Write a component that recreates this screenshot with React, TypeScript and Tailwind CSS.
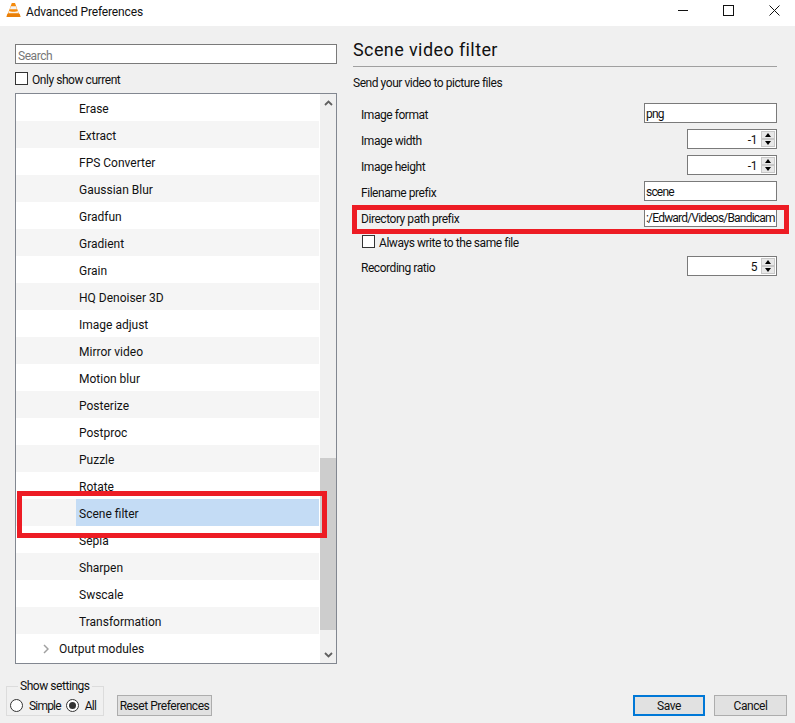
const treeItems = [
  "Erase", "Extract", "FPS Converter", "Gaussian Blur", "Gradfun", "Gradient", "Grain",
  "HQ Denoiser 3D", "Image adjust", "Mirror video", "Motion blur", "Posterize", "Postproc",
  "Puzzle", "Rotate", "Scene filter", "Sepia", "Sharpen", "Swscale", "Transformation",
]

function VlcIcon() {
  return (
    <svg width="15" height="16" viewBox="0 0 16 17">
      <path d="M6.2 1h3.4l4.4 12H1.8z" fill="#f58a0b" />
      <path d="M5.2 4.6h5.4l1 3H4.2z" fill="#f4f4f4" />
      <path d="M3.4 9.6c1.2 1 8 1 9.2 0l.8 2.4H2.6z" fill="#f9f2e8" />
      <path d="M1.4 12.6h13.2l1 3.4H.4z" fill="#e97f08" />
    </svg>
  )
}

function Chevron({ up }: { up?: boolean }) {
  return (
    <svg width="9" height="6" viewBox="0 0 9 6">
      <path d={up ? "M1 5l3.5-3.5L8 5" : "M1 1l3.5 3.5L8 1"} fill="none" stroke="#606060" strokeWidth="1.8" />
    </svg>
  )
}

function Check({ label }: { label: string }) {
  return (
    <div className="flex items-center gap-[4px]">
      <span className="w-[13px] h-[13px] bg-white border border-[#333]" />
      <span className="pt-[2px]">{label}</span>
    </div>
  )
}

function TextRow({ label, value }: { label: string; value: string }) {
  return (
    <div className="flex items-center justify-between h-[20px]">
      <span className="pt-[3px]">{label}</span>
      <input
        readOnly
        value={value}
        className="w-[133px] h-[20px] bg-white border border-[#7a7a7a] pl-[1px] pt-[2px] outline-none tracking-[-0.8px]"
      />
    </div>
  )
}

function SpinRow({ label, value }: { label: string; value: string }) {
  return (
    <div className="flex items-center justify-between h-[20px]">
      <span className="pt-[3px]">{label}</span>
      <div className="w-[90px] h-[20px] bg-white border border-[#7a7a7a] flex items-center justify-end pr-[1px]">
        <span className="mr-[4px] pt-[2px]">{value}</span>
        <div className="w-[14px] h-[16px] flex flex-col">
          <div className="h-[8px] bg-[#e8e8e8] border border-[#c8c8c8] flex items-center justify-center">
            <span className="w-0 h-0 border-x-[3px] border-x-transparent border-b-[4px] border-b-black" />
          </div>
          <div className="h-[8px] bg-[#e8e8e8] border border-[#c8c8c8] flex items-center justify-center">
            <span className="w-0 h-0 border-x-[3px] border-x-transparent border-t-[4px] border-t-black" />
          </div>
        </div>
      </div>
    </div>
  )
}

function Radio({ label, checked }: { label: string; checked?: boolean }) {
  return (
    <div className="flex items-center gap-[6px]">
      <span className="w-[13px] h-[13px] rounded-full bg-white border border-[#333] flex items-center justify-center">
        {checked && <span className="w-[7px] h-[7px] rounded-full bg-[#333]" />}
      </span>
      <span className="pt-[1px] tracking-[-0.8px]">{label}</span>
    </div>
  )
}

export default function App() {
  return (
    <main className="relative w-[795px] h-[723px] overflow-hidden bg-[#f0f0f0] text-[12px] leading-[16px] tracking-[-0.45px] text-[#111] font-['Roboto',sans-serif] flex flex-col">
      <header className="h-[26px] bg-white flex items-center shrink-0 pb-[6px]">
        <div className="ml-[6px] mr-[5px] flex"><VlcIcon /></div>
        <span className="flex-1 mt-[4px] tracking-[-0.15px]">Advanced Preferences</span>
        <svg width="10" height="3" viewBox="0 0 10 3" className="mr-[35px]"><path d="M0 1.5h10" stroke="#111" /></svg>
        <svg width="11" height="11" viewBox="0 0 11 11" className="mr-[35px]"><rect x=".5" y=".5" width="10" height="10" fill="none" stroke="#111" /></svg>
        <svg width="11" height="11" viewBox="0 0 11 11" className="mr-[15px]"><path d="M.5.5l10 10M10.5.5l-10 10" stroke="#111" /></svg>
      </header>

      <div className="flex flex-1 min-h-0 pl-[15px]">
        <section className="w-[322px] pt-[18px] flex flex-col">
          <input
            readOnly
            placeholder="Search"
            className="h-[20px] bg-white border border-[#7a7a7a] px-[2px] pt-[4px] outline-none placeholder:text-[#777]"
          />
          <div className="mt-[8px] h-[13px] flex items-center"><Check label="Only show current" /></div>
          <div className="mt-[8px] h-[571px] bg-white border border-[#828790] flex tracking-normal">
            <div className="flex-1 overflow-hidden pr-[1px]">
              {treeItems.map((item, i) => (
                <div key={item} className={`h-[27px] flex items-center ${i % 2 ? "bg-[#f5f5f5]" : "bg-white"}`}>
                  <span className={`h-full w-full ml-[60px] pl-[3px] pt-[2px] flex items-center ${item === "Scene filter" ? "bg-[#c4dcf5]" : ""}`}>
                    {item}
                  </span>
                </div>
              ))}
              <div className="h-[27px] flex items-center pl-[27px] pt-[2px]">
                <svg width="6" height="10" viewBox="0 0 6 10" className="mr-[10px]">
                  <path d="M1 1l4 4-4 4" fill="none" stroke="#a0a0a0" strokeWidth="1.5" />
                </svg>
                Output modules
              </div>
            </div>
            <div className="w-[16px] bg-[#f0f0f0] flex flex-col items-center">
              <div className="h-[17px] flex items-center justify-center"><Chevron up /></div>
              <div className="flex-1" />
              <div className="w-full h-[172px] bg-[#cdcdcd]" />
              <div className="h-[16px]" />
              <div className="h-[17px] flex items-center justify-center"><Chevron /></div>
            </div>
          </div>
        </section>

        <section className="w-[424px] ml-[16px] pt-[11px]">
          <h1 className="text-[18px] tracking-[0.4px] leading-[24px] pt-[1px] pb-[4px] border-b border-[#a0a0a0] h-[30px] font-normal">Scene video filter</h1>
          <p className="mt-[8px]">Send your video to picture files</p>
          <div className="mt-[12px] pl-[8px] w-[424px] flex flex-col gap-[6px]">
            <TextRow label="Image format" value="png" />
            <SpinRow label="Image width" value="-1" />
            <SpinRow label="Image height" value="-1" />
            <TextRow label="Filename prefix" value="scene" />
            <TextRow label="Directory path prefix" value=":/Edward/Videos/Bandicam" />
            <div className="h-[17px] flex items-center pl-[1px]"><Check label="Always write to the same file" /></div>
            <SpinRow label="Recording ratio" value="5" />
          </div>
        </section>
      </div>

      <footer className="h-[45px] shrink-0 flex items-end pb-[7px] pl-[6px] pr-[8px]">
        <fieldset className="w-[98px] min-w-0 h-[38px] border border-[#dcdcdc] px-[3px]">
          <legend className="ml-[8px] px-[2px] h-[16px]">Show settings</legend>
          <div className="flex items-center gap-[5px] mt-[3px]">
            <Radio label="Simple" />
            <Radio label="All" checked />
          </div>
        </fieldset>
        <button className="ml-[13px] w-[95px] h-[21px] pt-[1px] bg-[#e1e1e1] border border-[#adadad] whitespace-nowrap">Reset Preferences</button>
        <button className="ml-auto w-[72px] h-[21px] pt-[1px] bg-[#e1e1e1] border-2 border-[#0078d7]">Save</button>
        <button className="ml-[9px] w-[73px] h-[21px] pt-[1px] bg-[#e1e1e1] border border-[#adadad]">Cancel</button>
      </footer>

      <div className="absolute left-[17px] top-[491px] w-[310px] h-[47px] border-[5px] border-[#ed1c24]" />
      <div className="absolute left-[352px] top-[205px] w-[437px] h-[29px] border-[5px] border-[#ed1c24]" />
    </main>
  )
}
